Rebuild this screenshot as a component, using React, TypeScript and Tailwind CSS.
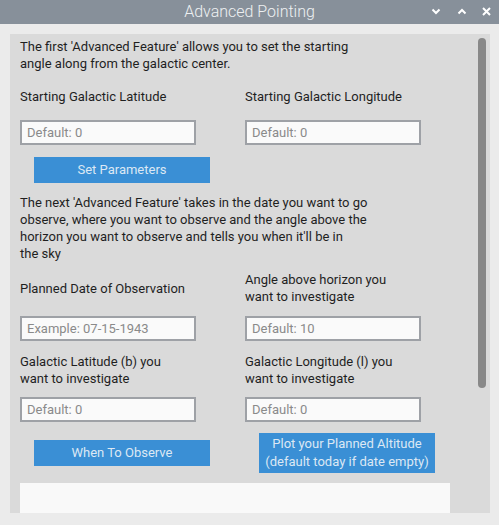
import React from "react";

function Field({ placeholder }: { placeholder: string }) {
  return (
    <div className="w-[176px] h-[25px] border-2 border-[#9ea1a6] bg-[#fafafa] flex items-center pl-[5px] text-[13px] text-[#8a8a8a]">
      {placeholder}
    </div>
  );
}

function Btn({ children, h = "h-[26px]" }: { children: React.ReactNode; h?: string }) {
  return (
    <div
      className={`ml-[14px] w-[176px] ${h} bg-[#3a8fd5] text-[#dce8f4] text-[13px] leading-[18px] flex flex-col items-center justify-center text-center`}
    >
      {children}
    </div>
  );
}

export default function App() {
  return (
    <div
      className="w-[499px] h-[525px] bg-[#ebebeb] flex flex-col overflow-hidden text-[#1f1f1f]"
      style={{ fontFamily: "Roboto, 'Noto Sans', sans-serif" }}
    >
      <div className="h-[24px] bg-[#87909a] relative flex items-center justify-center shrink-0">
        <span className="text-[16px] font-light text-[#eef0f2] leading-none">Advanced Pointing</span>
        <svg className="absolute left-[431px] top-[8px]" width="10" height="7" viewBox="0 0 10 7">
          <path d="M1.5 1.5 L5 5 L8.5 1.5" stroke="#ffffff" strokeWidth="2" fill="none" />
        </svg>
        <svg className="absolute left-[457px] top-[8px]" width="10" height="7" viewBox="0 0 10 7">
          <path d="M1.5 5.5 L5 2 L8.5 5.5" stroke="#ffffff" strokeWidth="2" fill="none" />
        </svg>
        <svg className="absolute left-[482px] top-[7px]" width="9" height="9" viewBox="0 0 9 9">
          <path d="M1 1 L8 8 M8 1 L1 8" stroke="#ffffff" strokeWidth="2" fill="none" />
        </svg>
      </div>
      <div className="h-[10px] shrink-0" />
      <div className="ml-[10px] w-[480px] h-[479px] bg-[#dadada] relative overflow-hidden shrink-0">
        <div className="absolute left-[468px] top-[4px] w-[8px] h-[350px] rounded-full bg-[#888888]" />
        <div className="pl-[10px] pt-[4px] text-[13px] leading-[17px]">
          <p>
            The first 'Advanced Feature' allows you to set the starting
            <br />
            angle along from the galactic center.
          </p>
          <div className="grid grid-cols-[225px_225px] mt-[16px]">
            <div>Starting Galactic Latitude</div>
            <div>Starting Galactic Longitude</div>
          </div>
          <div className="grid grid-cols-[225px_225px] mt-[15px]">
            <Field placeholder="Default: 0" />
            <Field placeholder="Default: 0" />
          </div>
          <div className="mt-[12px]">
            <Btn>Set Parameters</Btn>
          </div>
          <p className="mt-[11px]">
            The next 'Advanced Feature' takes in the date you want to go
            <br />
            observe, where you want to observe and the angle above the
            <br />
            horizon you want to observe and tells you when it'll be in
            <br />
            the sky
          </p>
          <div className="grid grid-cols-[225px_225px] items-center mt-[9px]">
            <div>Planned Date of Observation</div>
            <div>
              Angle above horizon you
              <br />
              want to investigate
            </div>
          </div>
          <div className="grid grid-cols-[225px_225px] mt-[11px]">
            <Field placeholder="Example: 07-15-1943" />
            <Field placeholder="Default: 10" />
          </div>
          <div className="grid grid-cols-[225px_225px] items-center mt-[12px]">
            <div>
              Galactic Latitude (b) you
              <br />
              want to investigate
            </div>
            <div>
              Galactic Longitude (l) you
              <br />
              want to investigate
            </div>
          </div>
          <div className="grid grid-cols-[225px_225px] mt-[10px]">
            <Field placeholder="Default: 0" />
            <Field placeholder="Default: 0" />
          </div>
          <div className="grid grid-cols-[225px_225px] items-center mt-[11px]">
            <Btn>When To Observe</Btn>
            <Btn h="h-[40px]">
              <span>Plot your Planned Altitude</span>
              <span>(default today if date empty)</span>
            </Btn>
          </div>
          <div className="mt-[10px] w-[430px] h-[60px] bg-[#f9f9f9]" />
        </div>
      </div>
    </div>
  );
}
